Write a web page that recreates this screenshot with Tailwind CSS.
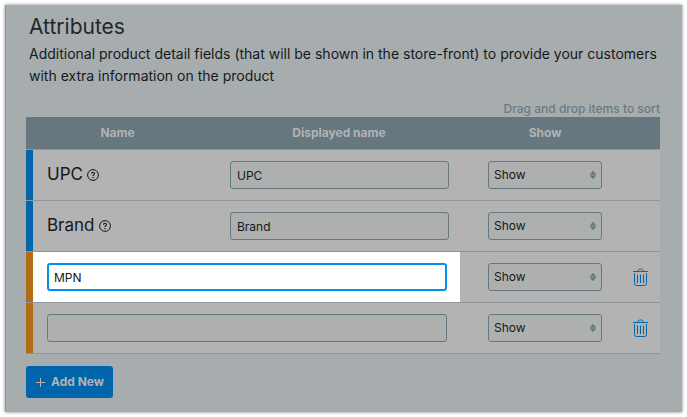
<!DOCTYPE html>
<html lang="en">
  <head>
    <meta charset="UTF-8" />
    <meta name="viewport" content="width=device-width, initial-scale=1" />
    <title>Attributes</title>
    <script src="https://cdn.jsdelivr.net/npm/@tailwindcss/browser@4"></script>
  </head>
  <body class="bg-white p-[5px] font-['Inter','Liberation_Sans',sans-serif] text-[#16181a]">
    <svg class="hidden">
      <symbol id="help" viewBox="0 0 12 12">
        <circle cx="6" cy="6" r="5.4" fill="none" stroke="currentColor" stroke-width="1" />
        <path d="M4.5 4.8c0-2 3-2 3-.2 0 1.100-1.500 1.200-1.500 2.400" fill="none" stroke="currentColor" stroke-width="1.100" />
        <path d="M5.400 8h1.200v1.200H5.400z" fill="currentColor" />
      </symbol>
      <symbol id="sorter" viewBox="0 0 6 8">
        <path d="M3 0L6 3.500H0zM3 8L0 4.500h6z" fill="currentColor" stroke="currentColor" stroke-width=".4" />
      </symbol>
      <symbol id="trash" viewBox="0 0 15 18">
        <path d="M0 3.500h15M4.500 3.300C4.500 .2 10.500 .2 10.500 3.300M1.500 5v10.500a2 2 0 0 0 2 2h8a2 2 0 0 0 2-2V5M4.500 6.500v8.500M7.500 6.500v8.500M10.500 6.500v8.500" fill="none" stroke="currentColor" stroke-width="1" />
      </symbol>
    </svg>

    <main class="border-l border-[#92989b] bg-[#a7adaf] pt-2 pr-[22px] pb-[14px] pl-5 shadow-[0_0_3px_rgba(0,0,0,0.5)]">
      <h1 class="pl-[3px] text-[21px] leading-7 text-[#232628]">Attributes</h1>
      <p class="pl-[3px] pt-[2px] text-sm leading-[22px]">
        Additional product detail fields (that will be shown in the store-front) to provide your customers with extra information on the product
      </p>
      <p class="pt-[14px] text-right text-xs leading-4 font-medium text-[#6a7983]">Drag and drop items to sort</p>

      <table class="w-full table-fixed border-separate border-spacing-0 bg-[#b3b3b3]">
        <colgroup>
          <col class="w-[7px]" />
          <col class="w-44" />
          <col />
          <col class="w-[152px]" />
          <col class="w-[39px]" />
        </colgroup>
        <thead>
          <tr class="h-[33px] bg-[#667780] text-xs text-[#b3b3b3]">
            <th colspan="2" class="border-b border-[#8f979c] font-bold">Name</th>
            <th class="border-b border-[#8f979c] font-bold">Displayed name</th>
            <th class="border-b border-[#8f979c] font-bold">Show</th>
            <th class="border-b border-[#8f979c]"></th>
          </tr>
        </thead>
        <tbody>
          <tr class="h-[51px]">
            <td class="border-b border-[#8f979c] bg-[#0065aa]"></td>
            <td class="border-b border-[#8f979c] pl-[14px]">
              <div class="flex items-center gap-1 text-[17px]">
                <label for="upc">UPC</label>
                <svg class="size-3"><use href="#help" /></svg>
              </div>
            </td>
            <td class="border-b border-[#8f979c] pr-5 pl-[21px]">
              <input id="upc" type="text" value="UPC" class="block h-7 w-full rounded-[3px] border border-[#667780] bg-[#adb0af] px-1.5 text-xs" />
            </td>
            <td class="border-b border-[#8f979c] px-[19px]">
              <div class="relative">
                <select aria-label="Show UPC" class="block h-7 w-full appearance-none rounded-[3px] border border-[#667780] bg-[#adb0af] px-[5px] text-xs">
                  <option>Show</option>
                  <option>Hide</option>
                </select>
                <svg class="pointer-events-none absolute top-[10px] right-1.5 h-2 w-1.5 text-[#667780]"><use href="#sorter" /></svg>
              </div>
            </td>
            <td class="border-b border-[#8f979c]"></td>
          </tr>
          <tr class="h-[51px]">
            <td class="border-b border-[#8f979c] bg-[#0065aa]"></td>
            <td class="border-b border-[#8f979c] pl-[14px]">
              <div class="flex items-center gap-1 text-[17px]">
                <label for="brand">Brand</label>
                <svg class="size-3"><use href="#help" /></svg>
              </div>
            </td>
            <td class="border-b border-[#8f979c] pr-5 pl-[21px]">
              <input id="brand" type="text" value="Brand" class="block h-7 w-full rounded-[3px] border border-[#667780] bg-[#adb0af] px-1.5 text-xs" />
            </td>
            <td class="border-b border-[#8f979c] px-[19px]">
              <div class="relative">
                <select aria-label="Show Brand" class="block h-7 w-full appearance-none rounded-[3px] border border-[#667780] bg-[#adb0af] px-[5px] text-xs">
                  <option>Show</option>
                  <option>Hide</option>
                </select>
                <svg class="pointer-events-none absolute top-[10px] right-1.5 h-2 w-1.5 text-[#667780]"><use href="#sorter" /></svg>
              </div>
            </td>
            <td class="border-b border-[#8f979c]"></td>
          </tr>
          <tr class="h-[51px]">
            <td class="border-b border-[#8f979c] bg-[#b06c14]"></td>
            <td colspan="2" class="border-b border-[#8f979c] pr-[9px]">
              <!-- highlighted field -->
              <div class="bg-white py-[11px] pr-[13px] pl-[14px]">
                <input type="text" value="MPN" aria-label="Attribute name" class="block h-7 w-full rounded-[3px] border-2 border-[#0090f0] bg-white px-[5px] text-xs outline-none" />
              </div>
            </td>
            <td class="border-b border-[#8f979c] px-[19px]">
              <div class="relative">
                <select aria-label="Show MPN" class="block h-7 w-full appearance-none rounded-[3px] border border-[#667780] bg-[#adb0af] px-[5px] text-xs">
                  <option>Show</option>
                  <option>Hide</option>
                </select>
                <svg class="pointer-events-none absolute top-[10px] right-1.5 h-2 w-1.5 text-[#667780]"><use href="#sorter" /></svg>
              </div>
            </td>
            <td class="border-b border-[#8f979c] pl-3">
              <button type="button" aria-label="Delete" class="block text-[#0065aa]"><svg class="h-[18px] w-[15px]"><use href="#trash" /></svg></button>
            </td>
          </tr>
          <tr class="h-[51px]">
            <td class="border-b border-[#8f979c] bg-[#b06c14]"></td>
            <td colspan="2" class="border-b border-[#8f979c] pr-[22px] pl-[14px]">
              <input type="text" aria-label="Attribute name" class="block h-7 w-full rounded-[3px] border border-[#667780] bg-[#adb0af] px-1.5 text-xs" />
            </td>
            <td class="border-b border-[#8f979c] px-[19px]">
              <div class="relative">
                <select aria-label="Show attribute" class="block h-7 w-full appearance-none rounded-[3px] border border-[#667780] bg-[#adb0af] px-[5px] text-xs">
                  <option>Show</option>
                  <option>Hide</option>
                </select>
                <svg class="pointer-events-none absolute top-[10px] right-1.5 h-2 w-1.5 text-[#667780]"><use href="#sorter" /></svg>
              </div>
            </td>
            <td class="border-b border-[#8f979c] pl-3">
              <button type="button" aria-label="Delete" class="block text-[#0065aa]"><svg class="h-[18px] w-[15px]"><use href="#trash" /></svg></button>
            </td>
          </tr>
        </tbody>
      </table>

      <button type="button" class="mt-3 flex h-8 items-center gap-1.5 rounded-[3px] bg-[#0065aa] pr-[9px] pl-[10px] text-xs font-bold text-[#b3b3b3]">
        <svg viewBox="0 0 9 9" class="size-[9px]"><path d="M4.500 0v9M0 4.500h9" stroke="currentColor" /></svg>
        Add New
      </button>
    </main>
  </body>
</html>
